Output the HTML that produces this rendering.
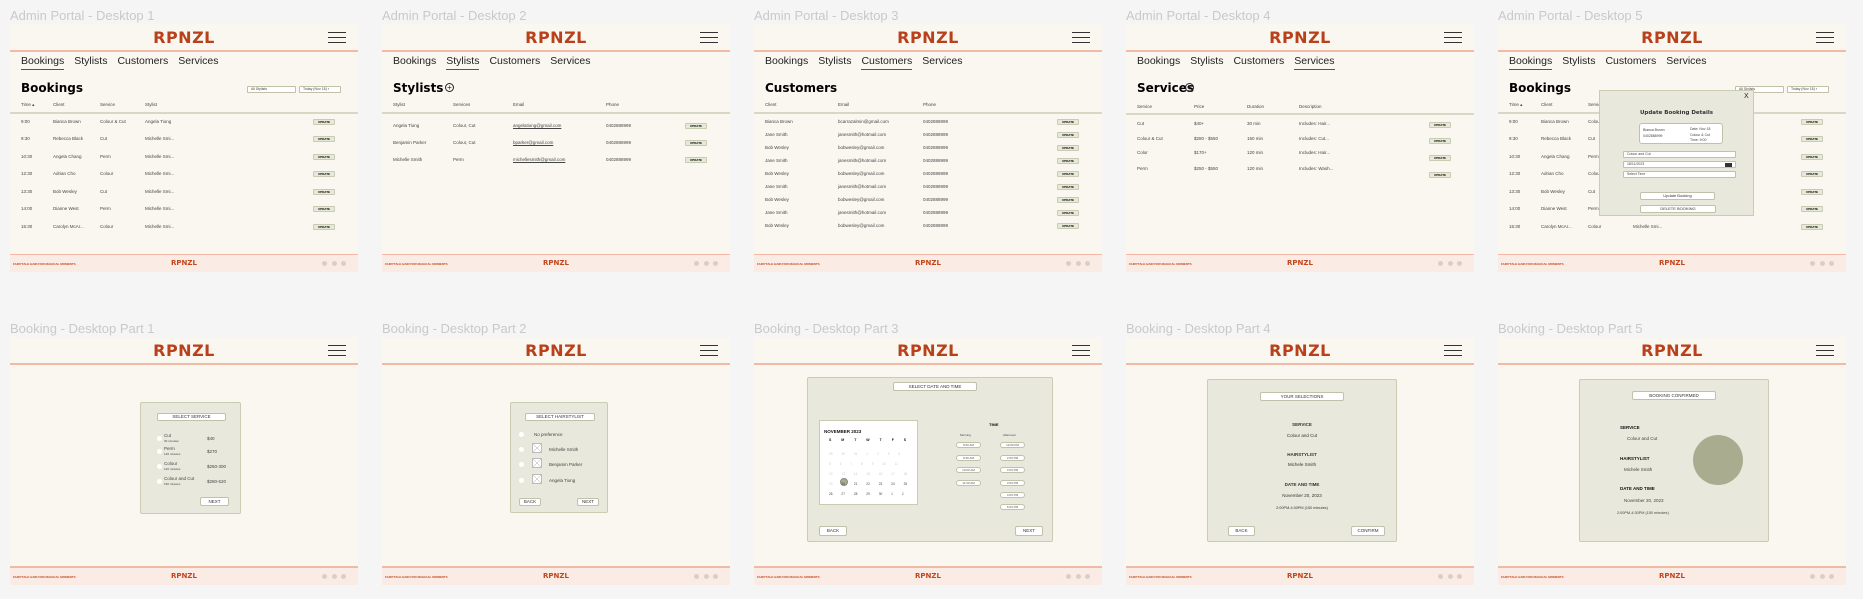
<!DOCTYPE html>
<html><head><meta charset="utf-8"><style>
*{margin:0;padding:0;box-sizing:border-box}
body{width:1863px;height:599px;background:#f5f5f5;position:relative;overflow:hidden;font-family:"Liberation Sans",sans-serif}
.lab{position:absolute;font-size:13px;color:#c9c9c9;white-space:nowrap}
.f{position:absolute;width:348px;height:248px;background:#faf7f0;overflow:hidden}
.ln{position:absolute;left:0;right:0;top:26px;height:2px;background:#efbba5}
.logo{position:absolute;top:4px;left:0;right:0;text-align:center;font:bold 16px "DejaVu Sans",sans-serif;color:#b8401a;letter-spacing:0.5px}
.hb{position:absolute;left:318px;top:8px;width:18px;height:11px;border-top:1px solid #333;border-bottom:1px solid #333}
.hb:after{content:"";position:absolute;left:0;right:0;top:4px;height:1px;background:#333}
.nav{position:absolute;top:31px;left:11px;font-size:10.5px;color:#222;white-space:nowrap}
.nav span{margin-right:10px;padding-bottom:2px}
.nav .a{border-bottom:1px solid #555}
.ft{position:absolute;left:0;right:0;top:230px;height:18px;background:#fbebe5;border-top:1px solid #f2b8a4}
.ft .tg{position:absolute;left:3px;top:7px;font:bold 3px sans-serif;color:#c2461c;white-space:nowrap}
.ft .lg{position:absolute;left:0;right:0;top:4px;text-align:center;font:bold 7px "DejaVu Sans",sans-serif;color:#c2461c}
.ft i{position:absolute;top:6px;width:5px;height:5px;border-radius:50%;background:#d9cfca}
.h1{position:absolute;left:11px;top:57px;font:bold 12px "DejaVu Sans",sans-serif;color:#000}
.t{position:absolute;font-size:4.5px;color:#444;white-space:nowrap}
.th{position:absolute;font-size:4.5px;color:#444;white-space:nowrap}
.hl{position:absolute;left:0;right:0;top:71px;height:2px;background:#d6d8c4}
.up{position:absolute;left:303px;width:22px;height:6px;background:#e6e8d8;border:1px solid #c9cbb3;border-radius:1px;font:bold 3px sans-serif;text-align:center;line-height:4px;color:#000}
.plus{position:absolute;top:59px;width:9px;height:9px;border:1px solid #222;border-radius:50%;font-size:8px;line-height:7px;text-align:center;color:#222}
.box{position:absolute;background:#e8e9dc;border:1px solid #c9cbb3;border-radius:2px}
.btn{position:absolute;background:#fff;border:1px solid #bfc1a8;border-radius:2px;font-size:4.5px;text-align:center;color:#333;white-space:nowrap}
.rad{position:absolute;width:5px;height:5px;border-radius:50%;background:#fff}
.b{font-weight:bold;color:#111}
.c{position:absolute;font-size:4.5px;color:#333;white-space:nowrap;left:0;right:0;text-align:center}
.pill{position:absolute;width:25px;height:6px;background:#fff;border:1px solid #bfc1a8;border-radius:3px;font-size:3px;line-height:4px;text-align:center;color:#555}
.sel{position:absolute;height:7px;background:#fff;border:1px solid #bfc1a8;border-radius:1px;font-size:3.5px;line-height:5px;padding-left:3px;color:#444}
</style></head><body>

<div class="lab" style="left:10px;top:8px">Admin Portal - Desktop 1</div>
<div class="lab" style="left:382px;top:8px">Admin Portal - Desktop 2</div>
<div class="lab" style="left:754px;top:8px">Admin Portal - Desktop 3</div>
<div class="lab" style="left:1126px;top:8px">Admin Portal - Desktop 4</div>
<div class="lab" style="left:1498px;top:8px">Admin Portal - Desktop 5</div>
<div class="lab" style="left:10px;top:321px">Booking  - Desktop Part 1</div>
<div class="lab" style="left:382px;top:321px">Booking  - Desktop Part 2</div>
<div class="lab" style="left:754px;top:321px">Booking - Desktop Part 3</div>
<div class="lab" style="left:1126px;top:321px">Booking - Desktop Part 4</div>
<div class="lab" style="left:1498px;top:321px">Booking - Desktop Part 5</div>

<!-- Frame 1 -->
<div class="f" style="left:10px;top:24px">
<div class="logo">RPNZL</div><div class="hb"></div><div class="ln"></div>
<div class="nav"><span class="a">Bookings</span><span>Stylists</span><span>Customers</span><span>Services</span></div>
<div class="h1">Bookings</div>
<div class="sel" style="left:237px;top:62px;width:49px">All Stylists</div>
<div class="sel" style="left:289px;top:62px;width:42px">Today (Nov 18) ▪</div>
<div class="th" style="left:11px;top:78px">Time ▴</div><div class="th" style="left:43px;top:78px">Client</div><div class="th" style="left:90px;top:78px">Service</div><div class="th" style="left:135px;top:78px">Stylist</div>
<div class="hl" style="top:88px"></div>
<div class="t" style="left:11px;top:95px">9:00</div><div class="t" style="left:43px;top:95px">Bianca Brown</div><div class="t" style="left:90px;top:95px">Colour &amp; Cut</div><div class="t" style="left:135px;top:95px">Angela Tiong</div><div class="up" style="top:95px">UPDATE</div>
<div class="t" style="left:11px;top:112px">9:30</div><div class="t" style="left:43px;top:112px">Rebecca Black</div><div class="t" style="left:90px;top:112px">Cut</div><div class="t" style="left:135px;top:112px">Michelle Smi...</div><div class="up" style="top:112px">UPDATE</div>
<div class="t" style="left:11px;top:130px">10:30</div><div class="t" style="left:43px;top:130px">Angela Chang</div><div class="t" style="left:90px;top:130px">Perm</div><div class="t" style="left:135px;top:130px">Michelle Smi...</div><div class="up" style="top:130px">UPDATE</div>
<div class="t" style="left:11px;top:147px">12:30</div><div class="t" style="left:43px;top:147px">Adrian Cho</div><div class="t" style="left:90px;top:147px">Colour</div><div class="t" style="left:135px;top:147px">Michelle Smi...</div><div class="up" style="top:147px">UPDATE</div>
<div class="t" style="left:11px;top:165px">13:30</div><div class="t" style="left:43px;top:165px">Bob Wesley</div><div class="t" style="left:90px;top:165px">Cut</div><div class="t" style="left:135px;top:165px">Michelle Smi...</div><div class="up" style="top:165px">UPDATE</div>
<div class="t" style="left:11px;top:182px">14:00</div><div class="t" style="left:43px;top:182px">Dianne West</div><div class="t" style="left:90px;top:182px">Perm</div><div class="t" style="left:135px;top:182px">Michelle Smi...</div><div class="up" style="top:182px">UPDATE</div>
<div class="t" style="left:11px;top:200px">15:30</div><div class="t" style="left:43px;top:200px">Carolyn McAr...</div><div class="t" style="left:90px;top:200px">Colour</div><div class="t" style="left:135px;top:200px">Michelle Smi...</div><div class="up" style="top:200px">UPDATE</div>
<div class="ft"><div class="tg">FAIRYTALE HAIR FOR MAGICAL MOMENTS</div><div class="lg">RPNZL</div><i style="left:312px"></i><i style="left:322px"></i><i style="left:331px"></i></div>
</div>

<!-- Frame 2 -->
<div class="f" style="left:382px;top:24px">
<div class="logo">RPNZL</div><div class="hb"></div><div class="ln"></div>
<div class="nav"><span>Bookings</span><span class="a">Stylists</span><span>Customers</span><span>Services</span></div>
<div class="h1">Stylists</div><div class="plus" style="left:63px">+</div>
<div class="th" style="left:11px;top:78px">Stylist</div><div class="th" style="left:71px;top:78px">Services</div><div class="th" style="left:131px;top:78px">Email</div><div class="th" style="left:224px;top:78px">Phone</div>
<div class="hl" style="top:88px"></div>
<div class="t" style="left:11px;top:99px">Angela Tiong</div><div class="t" style="left:71px;top:99px">Colour, Cut</div><div class="t" style="left:131px;top:99px;text-decoration:underline">angelationg@gmail.com</div><div class="t" style="left:224px;top:99px">0402888999</div><div class="up" style="top:99px">UPDATE</div>
<div class="t" style="left:11px;top:116px">Benjamin Parker</div><div class="t" style="left:71px;top:116px">Colour, Cut</div><div class="t" style="left:131px;top:116px;text-decoration:underline">bparker@gmail.com</div><div class="t" style="left:224px;top:116px">0402888999</div><div class="up" style="top:116px">UPDATE</div>
<div class="t" style="left:11px;top:133px">Michelle Smith</div><div class="t" style="left:71px;top:133px">Perm</div><div class="t" style="left:131px;top:133px;text-decoration:underline">michellesmith@gmail.com</div><div class="t" style="left:224px;top:133px">0402888999</div><div class="up" style="top:133px">UPDATE</div>
<div class="ft"><div class="tg">FAIRYTALE HAIR FOR MAGICAL MOMENTS</div><div class="lg">RPNZL</div><i style="left:312px"></i><i style="left:322px"></i><i style="left:331px"></i></div>
</div>

<!-- Frame 3 -->
<div class="f" style="left:754px;top:24px">
<div class="logo">RPNZL</div><div class="hb"></div><div class="ln"></div>
<div class="nav"><span>Bookings</span><span>Stylists</span><span class="a">Customers</span><span>Services</span></div>
<div class="h1">Customers</div>
<div class="th" style="left:11px;top:78px">Client</div><div class="th" style="left:84px;top:78px">Email</div><div class="th" style="left:169px;top:78px">Phone</div>
<div class="hl" style="top:88px"></div>
<div class="t" style="left:11px;top:95px">Bianca Brown</div><div class="t" style="left:84px;top:95px">bcarrazalmin@gmail.com</div><div class="t" style="left:169px;top:95px">0402888999</div><div class="up" style="top:95px">UPDATE</div>
<div class="t" style="left:11px;top:108px">Jane Smith</div><div class="t" style="left:84px;top:108px">janesmith@hotmail.com</div><div class="t" style="left:169px;top:108px">0402888999</div><div class="up" style="top:108px">UPDATE</div>
<div class="t" style="left:11px;top:121px">Bob Wesley</div><div class="t" style="left:84px;top:121px">bobwesley@gmail.com</div><div class="t" style="left:169px;top:121px">0402888999</div><div class="up" style="top:121px">UPDATE</div>
<div class="t" style="left:11px;top:134px">Jane Smith</div><div class="t" style="left:84px;top:134px">janesmith@hotmail.com</div><div class="t" style="left:169px;top:134px">0402888999</div><div class="up" style="top:134px">UPDATE</div>
<div class="t" style="left:11px;top:147px">Bob Wesley</div><div class="t" style="left:84px;top:147px">bobwesley@gmail.com</div><div class="t" style="left:169px;top:147px">0402888999</div><div class="up" style="top:147px">UPDATE</div>
<div class="t" style="left:11px;top:160px">Jane Smith</div><div class="t" style="left:84px;top:160px">janesmith@hotmail.com</div><div class="t" style="left:169px;top:160px">0402888999</div><div class="up" style="top:160px">UPDATE</div>
<div class="t" style="left:11px;top:173px">Bob Wesley</div><div class="t" style="left:84px;top:173px">bobwesley@gmail.com</div><div class="t" style="left:169px;top:173px">0402888999</div><div class="up" style="top:173px">UPDATE</div>
<div class="t" style="left:11px;top:186px">Jane Smith</div><div class="t" style="left:84px;top:186px">janesmith@hotmail.com</div><div class="t" style="left:169px;top:186px">0402888999</div><div class="up" style="top:186px">UPDATE</div>
<div class="t" style="left:11px;top:199px">Bob Wesley</div><div class="t" style="left:84px;top:199px">bobwesley@gmail.com</div><div class="t" style="left:169px;top:199px">0402888999</div><div class="up" style="top:199px">UPDATE</div>
<div class="ft"><div class="tg">FAIRYTALE HAIR FOR MAGICAL MOMENTS</div><div class="lg">RPNZL</div><i style="left:312px"></i><i style="left:322px"></i><i style="left:331px"></i></div>
</div>

<!-- Frame 4 -->
<div class="f" style="left:1126px;top:24px">
<div class="logo">RPNZL</div><div class="hb"></div><div class="ln"></div>
<div class="nav"><span>Bookings</span><span>Stylists</span><span>Customers</span><span class="a">Services</span></div>
<div class="h1">Services</div><div class="plus" style="left:59px">+</div>
<div class="th" style="left:11px;top:80px">Service</div><div class="th" style="left:68px;top:80px">Price</div><div class="th" style="left:121px;top:80px">Duration</div><div class="th" style="left:173px;top:80px">Description</div>
<div class="hl" style="top:89px"></div>
<div class="t" style="left:11px;top:97px">Cut</div><div class="t" style="left:68px;top:97px">$40+</div><div class="t" style="left:121px;top:97px">30 min</div><div class="t" style="left:173px;top:97px">Includes: Hair...</div><div class="up" style="top:98px">UPDATE</div>
<div class="t" style="left:11px;top:112px">Colour &amp; Cut</div><div class="t" style="left:68px;top:112px">$280 - $550</div><div class="t" style="left:121px;top:112px">150 min</div><div class="t" style="left:173px;top:112px">Includes: Cut...</div><div class="up" style="top:114px">UPDATE</div>
<div class="t" style="left:11px;top:126px">Color</div><div class="t" style="left:68px;top:126px">$170+</div><div class="t" style="left:121px;top:126px">120 min</div><div class="t" style="left:173px;top:126px">Includes: Hair...</div><div class="up" style="top:131px">UPDATE</div>
<div class="t" style="left:11px;top:142px">Perm</div><div class="t" style="left:68px;top:142px">$250 - $550</div><div class="t" style="left:121px;top:142px">120 min</div><div class="t" style="left:173px;top:142px">Includes: Wash...</div><div class="up" style="top:148px">UPDATE</div>
<div class="ft"><div class="tg">FAIRYTALE HAIR FOR MAGICAL MOMENTS</div><div class="lg">RPNZL</div><i style="left:312px"></i><i style="left:322px"></i><i style="left:331px"></i></div>
</div>

<!-- Frame 5 -->
<div class="f" style="left:1498px;top:24px">
<div class="logo">RPNZL</div><div class="hb"></div><div class="ln"></div>
<div class="nav"><span class="a">Bookings</span><span>Stylists</span><span>Customers</span><span>Services</span></div>
<div class="h1">Bookings</div>
<div class="sel" style="left:237px;top:62px;width:49px">All Stylists</div>
<div class="sel" style="left:289px;top:62px;width:42px">Today (Nov 18) ▪</div>
<div class="th" style="left:11px;top:78px">Time ▴</div><div class="th" style="left:43px;top:78px">Client</div><div class="th" style="left:90px;top:78px">Service</div><div class="th" style="left:135px;top:78px">Stylist</div>
<div class="hl" style="top:88px"></div>
<div class="t" style="left:11px;top:95px">9:00</div><div class="t" style="left:43px;top:95px">Bianca Brown</div><div class="t" style="left:90px;top:95px">Colour &amp; Cut</div><div class="up" style="top:95px">UPDATE</div>
<div class="t" style="left:11px;top:112px">9:30</div><div class="t" style="left:43px;top:112px">Rebecca Black</div><div class="t" style="left:90px;top:112px">Cut</div><div class="up" style="top:112px">UPDATE</div>
<div class="t" style="left:11px;top:130px">10:30</div><div class="t" style="left:43px;top:130px">Angela Chang</div><div class="t" style="left:90px;top:130px">Perm</div><div class="up" style="top:130px">UPDATE</div>
<div class="t" style="left:11px;top:147px">12:30</div><div class="t" style="left:43px;top:147px">Adrian Cho</div><div class="t" style="left:90px;top:147px">Colour</div><div class="up" style="top:147px">UPDATE</div>
<div class="t" style="left:11px;top:165px">13:30</div><div class="t" style="left:43px;top:165px">Bob Wesley</div><div class="t" style="left:90px;top:165px">Cut</div><div class="up" style="top:165px">UPDATE</div>
<div class="t" style="left:11px;top:182px">14:00</div><div class="t" style="left:43px;top:182px">Dianne West</div><div class="t" style="left:90px;top:182px">Perm</div><div class="up" style="top:182px">UPDATE</div>
<div class="t" style="left:11px;top:200px">15:30</div><div class="t" style="left:43px;top:200px">Carolyn McAr...</div><div class="t" style="left:90px;top:200px">Colour</div><div class="t" style="left:135px;top:200px">Michelle Smi...</div><div class="up" style="top:200px">UPDATE</div>
<div class="box" style="left:101px;top:66px;width:155px;height:126px;border-radius:0">
 <div class="t" style="left:144px;top:2px;font-size:7px;color:#222">X</div>
 <div class="c b" style="top:19px;font:bold 5.5px 'DejaVu Sans',sans-serif">Update Booking Details</div>
 <div style="position:absolute;left:39px;top:32px;width:84px;height:21px;background:#fff;border:1px solid #bfc1a8;border-radius:3px">
  <div class="t" style="left:3px;top:4px;font-size:3.5px">Bianca Brown</div><div class="t" style="left:3px;top:10px;font-size:3.5px">0402888999</div>
  <div class="t" style="left:50px;top:3px;font-size:3.5px">Date: Nov 18</div><div class="t" style="left:50px;top:9px;font-size:3.5px">Colour &amp; Cut</div><div class="t" style="left:50px;top:14px;font-size:3.5px">Time: 9:00</div>
 </div>
 <div class="sel" style="left:23px;top:60px;width:113px">Colour and Cut</div>
 <div class="sel" style="left:23px;top:70px;width:113px">18/11/2023<span style="position:absolute;right:3px;top:1px;width:7px;height:4px;background:#333"></span></div>
 <div class="sel" style="left:23px;top:80px;width:113px">Select Time</div>
 <div class="btn" style="left:40px;top:101px;width:75px;height:8px;line-height:6px;font-size:4px">Update Booking</div>
 <div class="btn" style="left:40px;top:114px;width:76px;height:8px;line-height:6px;font-size:4px">DELETE BOOKING</div>
</div>
<div class="ft"><div class="tg">FAIRYTALE HAIR FOR MAGICAL MOMENTS</div><div class="lg">RPNZL</div><i style="left:312px"></i><i style="left:322px"></i><i style="left:331px"></i></div>
</div>

<!-- Part 1 -->
<div class="f" style="left:10px;top:337px">
<div class="logo">RPNZL</div><div class="hb"></div><div class="ln"></div>
<div class="box" style="left:130px;top:65px;width:101px;height:112px">
 <div class="btn" style="left:16px;top:10px;width:69px;height:8px;line-height:6px">SELECT SERVICE</div>
 <div class="rad" style="left:16px;top:33px"></div><div class="t" style="left:23px;top:30px">Cut<br><span style="font-size:3px">30 minutes</span></div><div class="t" style="left:66px;top:33px">$40</div>
 <div class="rad" style="left:16px;top:46px"></div><div class="t" style="left:23px;top:43px">Perm<br><span style="font-size:3px">120 minutes</span></div><div class="t" style="left:66px;top:46px">$270</div>
 <div class="rad" style="left:16px;top:61px"></div><div class="t" style="left:23px;top:58px">Colour<br><span style="font-size:3px">120 minutes</span></div><div class="t" style="left:66px;top:61px">$250-300</div>
 <div class="rad" style="left:16px;top:76px"></div><div class="t" style="left:23px;top:73px">Colour and Cut<br><span style="font-size:3px">150 minutes</span></div><div class="t" style="left:66px;top:76px">$280-520</div>
 <div class="btn" style="left:59px;top:94px;width:29px;height:9px;line-height:7px">NEXT</div>
</div>
<div class="ln" style="top:229px;height:1px"></div>
<div class="ft"><div class="tg">FAIRYTALE HAIR FOR MAGICAL MOMENTS</div><div class="lg">RPNZL</div><i style="left:312px"></i><i style="left:322px"></i><i style="left:331px"></i></div>
</div>

<!-- Part 2 -->
<div class="f" style="left:382px;top:337px">
<div class="logo">RPNZL</div><div class="hb"></div><div class="ln"></div>
<div class="box" style="left:128px;top:65px;width:98px;height:111px">
 <div class="btn" style="left:14px;top:10px;width:70px;height:8px;line-height:6px">SELECT HAIRSTYLIST</div>
 <div class="rad" style="left:8px;top:29px"></div><div class="t" style="left:23px;top:29px">No preference</div>
 <div class="rad" style="left:8px;top:44px"></div><div style="position:absolute;left:21px;top:40px;width:10px;height:10px;background:#fff;border:1px solid #bbb;background-image:linear-gradient(45deg,transparent 47%,#aaa 48%,#aaa 52%,transparent 53%),linear-gradient(-45deg,transparent 47%,#aaa 48%,#aaa 52%,transparent 53%)"></div><div class="t" style="left:38px;top:44px">Michelle Smith</div>
 <div class="rad" style="left:8px;top:59px"></div><div style="position:absolute;left:21px;top:55px;width:10px;height:10px;background:#fff;border:1px solid #bbb;background-image:linear-gradient(45deg,transparent 47%,#aaa 48%,#aaa 52%,transparent 53%),linear-gradient(-45deg,transparent 47%,#aaa 48%,#aaa 52%,transparent 53%)"></div><div class="t" style="left:38px;top:59px">Benjamin Parker</div>
 <div class="rad" style="left:8px;top:75px"></div><div style="position:absolute;left:21px;top:71px;width:10px;height:10px;background:#fff;border:1px solid #bbb;background-image:linear-gradient(45deg,transparent 47%,#aaa 48%,#aaa 52%,transparent 53%),linear-gradient(-45deg,transparent 47%,#aaa 48%,#aaa 52%,transparent 53%)"></div><div class="t" style="left:38px;top:75px">Angela Tiong</div>
 <div class="btn" style="left:8px;top:95px;width:22px;height:8px;line-height:6px">BACK</div>
 <div class="btn" style="left:66px;top:95px;width:22px;height:8px;line-height:6px">NEXT</div>
</div>
<div class="ln" style="top:229px;height:1px"></div>
<div class="ft"><div class="tg">FAIRYTALE HAIR FOR MAGICAL MOMENTS</div><div class="lg">RPNZL</div><i style="left:312px"></i><i style="left:322px"></i><i style="left:331px"></i></div>
</div>

<!-- Part 3 -->
<div class="f" style="left:754px;top:337px">
<div class="logo">RPNZL</div><div class="hb"></div><div class="ln"></div>
<div class="box" style="left:53px;top:40px;width:246px;height:165px">
 <div class="btn" style="left:85px;top:4px;width:84px;height:9px;line-height:7px">SELECT DATE AND TIME</div>
 <div style="position:absolute;left:11px;top:42px;width:99px;height:85px;background:#fff;border:1px solid #c9cbb3">
  <div class="t b" style="left:4px;top:8px;font-size:4.5px">NOVEMBER 2023</div>
  <div class="t b" style="left:9px;top:17px;font-size:3.5px;word-spacing:9px">S M T W T F S</div>
  <div class="t" style="left:9px;top:31px;font-size:3.2px;color:#ccc;word-spacing:8px">29 30 31 1 2 3 4</div>
  <div class="t" style="left:9px;top:41px;font-size:3.2px;color:#ccc;word-spacing:8px">5 6 7 8 9 10 11</div>
  <div class="t" style="left:9px;top:51px;font-size:3.2px;color:#ccc;word-spacing:8px">12 13 14 15 16 17 18</div>
  <div style="position:absolute;left:20px;top:57px;width:8px;height:8px;border-radius:50%;background:#a9ac8f;border:1px solid #888"></div>
  <div class="t" style="left:9px;top:61px;font-size:3.2px;word-spacing:8px"><span style="color:#ccc">19</span> 20 21 22 23 24 25</div>
  <div class="t" style="left:9px;top:71px;font-size:3.2px;word-spacing:8px">26 27 28 29 30 <span style="color:#555">1 2</span></div>
 </div>
 <div class="t b" style="left:181px;top:44px;font-size:4px">TIME</div>
 <div class="t" style="left:152px;top:55px;font-size:3px">Morning</div><div class="t" style="left:195px;top:55px;font-size:3px">Afternoon</div>
 <div class="pill" style="left:148px;top:64px">9:00 AM</div><div class="pill" style="left:192px;top:64px">12:00 PM</div>
 <div class="pill" style="left:148px;top:77px">9:30 AM</div><div class="pill" style="left:192px;top:77px">2:00 PM</div>
 <div class="pill" style="left:148px;top:89px">10:00 AM</div><div class="pill" style="left:192px;top:89px">3:00 PM</div>
 <div class="pill" style="left:148px;top:102px">11:00 AM</div><div class="pill" style="left:192px;top:102px">3:00 PM</div>
 <div class="pill" style="left:192px;top:114px">4:00 PM</div>
 <div class="pill" style="left:192px;top:126px">6:00 PM</div>
 <div class="btn" style="left:11px;top:148px;width:28px;height:10px;line-height:8px">BACK</div>
 <div class="btn" style="left:207px;top:148px;width:28px;height:10px;line-height:8px">NEXT</div>
</div>
<div class="ln" style="top:229px;height:1px"></div>
<div class="ft"><div class="tg">FAIRYTALE HAIR FOR MAGICAL MOMENTS</div><div class="lg">RPNZL</div><i style="left:312px"></i><i style="left:322px"></i><i style="left:331px"></i></div>
</div>

<!-- Part 4 -->
<div class="f" style="left:1126px;top:337px">
<div class="logo">RPNZL</div><div class="hb"></div><div class="ln"></div>
<div class="box" style="left:81px;top:42px;width:190px;height:163px">
 <div class="btn" style="left:52px;top:12px;width:84px;height:9px;line-height:7px">YOUR SELECTIONS</div>
 <div class="c b" style="top:42px">SERVICE</div>
 <div class="c" style="top:53px">Colour and Cut</div>
 <div class="c b" style="top:72px">HAIRSTYLIST</div>
 <div class="c" style="top:82px">Michele Smith</div>
 <div class="c b" style="top:102px">DATE AND TIME</div>
 <div class="c" style="top:113px">November 20, 2023</div>
 <div class="c" style="top:126px;font-size:3.8px">2:00PM-4:30PM (150 minutes)</div>
 <div class="btn" style="left:20px;top:146px;width:27px;height:10px;line-height:8px">BACK</div>
 <div class="btn" style="left:143px;top:146px;width:34px;height:10px;line-height:8px">CONFIRM</div>
</div>
<div class="ln" style="top:229px;height:1px"></div>
<div class="ft"><div class="tg">FAIRYTALE HAIR FOR MAGICAL MOMENTS</div><div class="lg">RPNZL</div><i style="left:312px"></i><i style="left:322px"></i><i style="left:331px"></i></div>
</div>

<!-- Part 5 -->
<div class="f" style="left:1498px;top:337px">
<div class="logo">RPNZL</div><div class="hb"></div><div class="ln"></div>
<div class="box" style="left:81px;top:42px;width:190px;height:163px">
 <div class="btn" style="left:52px;top:11px;width:84px;height:9px;line-height:7px">BOOKING CONFIRMED</div>
 <div class="t b" style="left:40px;top:45px">SERVICE</div>
 <div class="t" style="left:47px;top:56px">Colour and Cut</div>
 <div class="t b" style="left:40px;top:76px">HAIRSTYLIST</div>
 <div class="t" style="left:44px;top:87px">Michele Smith</div>
 <div class="t b" style="left:40px;top:106px">DATE AND TIME</div>
 <div class="t" style="left:44px;top:118px">November 20, 2023</div>
 <div class="t" style="left:37px;top:131px;font-size:3.8px">2:00PM-4:30PM (150 minutes)</div>
 <div style="position:absolute;left:113px;top:55px;width:50px;height:50px;border-radius:50%;background:#a9ac8f"></div>
</div>
<div class="ln" style="top:229px;height:1px"></div>
<div class="ft"><div class="tg">FAIRYTALE HAIR FOR MAGICAL MOMENTS</div><div class="lg">RPNZL</div><i style="left:312px"></i><i style="left:322px"></i><i style="left:331px"></i></div>
</div>

</body></html>
